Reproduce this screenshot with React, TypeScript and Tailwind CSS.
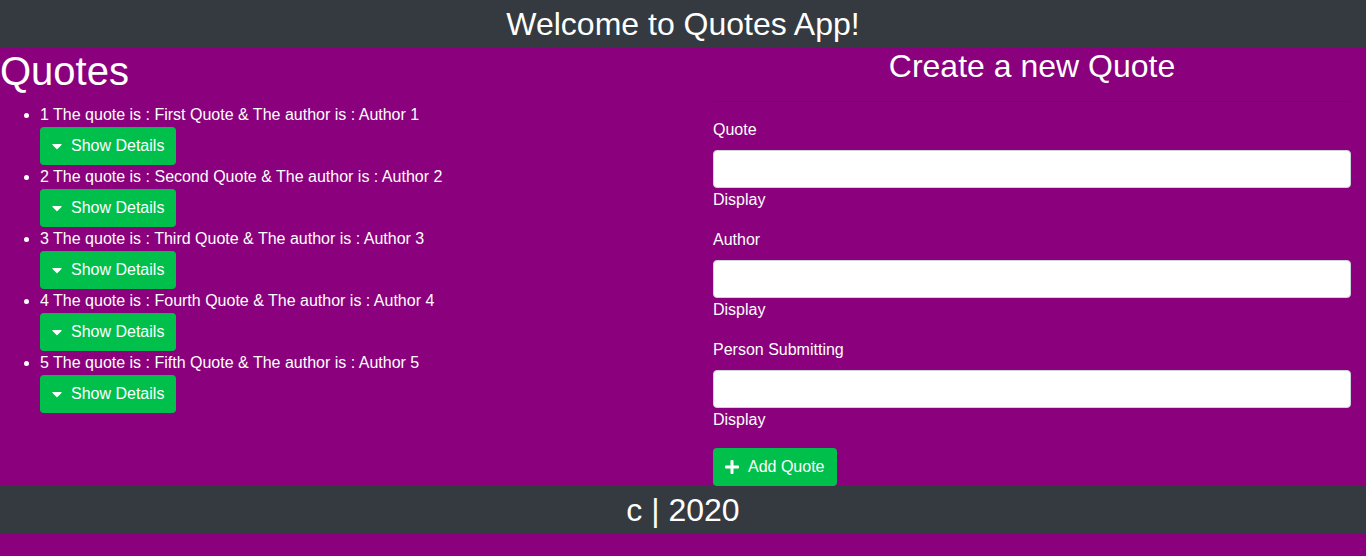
import React from 'react'

const quotes = [
  { id: 1, text: 'First Quote', author: 'Author 1' },
  { id: 2, text: 'Second Quote', author: 'Author 2' },
  { id: 3, text: 'Third Quote', author: 'Author 3' },
  { id: 4, text: 'Fourth Quote', author: 'Author 4' },
  { id: 5, text: 'Fifth Quote', author: 'Author 5' },
]

const fields = ['Quote', 'Author', 'Person Submitting']

const App: React.FC = () => {
  return (
    <div className="min-h-[556px] bg-[#8b007d] text-white font-['Liberation_Sans',Arial,sans-serif] text-base leading-6">
      <header className="h-[47px] bg-[#343a40] flex items-center justify-center">
        <h1 className="text-[32px] leading-[38px]">Welcome to Quotes App!</h1>
      </header>

      <main className="grid grid-cols-2">
        <section>
          <h1 className="text-[40px] leading-[48px] mb-2">Quotes</h1>
          <ul className="list-disc pl-10 mb-4">
            {quotes.map((q) => (
              <li key={q.id}>
                {q.id} The quote is : {q.text} &amp; The author is : {q.author}
                <div>
                  <button className="h-[38px] px-3 flex items-center rounded bg-[#00c04b] text-white">
                    <svg width="10" height="16" viewBox="0 0 320 512" className="mr-[9px]" fill="currentColor">
                      <path d="M31.3 192h257.3c17.8 0 26.7 21.5 14.1 34.1L174.1 354.8c-7.8 7.8-20.5 7.8-28.3 0L17.2 226.1C4.6 213.5 13.5 192 31.3 192z" />
                    </svg>
                    Show Details
                  </button>
                </div>
              </li>
            ))}
          </ul>
        </section>

        <section className="pl-[30px] pr-[15px]">
          <h2 className="text-[32px] leading-[38px] text-center">Create a new Quote</h2>
          <hr className="mt-4 mb-4 border-t border-black/10" />
          <form>
            {fields.map((f) => (
              <div key={f} className="mb-4">
                <label className="block mb-2">{f}</label>
                <input className="block w-full h-[38px] px-3 bg-white text-[#495057] rounded border border-[#ced4da]" />
                <div>Display</div>
              </div>
            ))}
            <button type="button" className="h-[38px] px-3 flex items-center rounded bg-[#00c04b] text-white">
              <svg width="14" height="16" viewBox="0 0 448 512" className="mr-[9px]" fill="currentColor">
                <path d="M416 208H272V64c0-17.67-14.33-32-32-32h-32c-17.67 0-32 14.33-32 32v144H32c-17.67 0-32 14.33-32 32v32c0 17.67 14.33 32 32 32h144v144c0 17.67 14.33 32 32 32h32c17.67 0 32-14.33 32-32V304h144c17.67 0 32-14.33 32-32v-32c0-17.67-14.33-32-32-32z" />
              </svg>
              Add Quote
            </button>
          </form>
        </section>
      </main>

      <footer className="h-[47px] bg-[#343a40] flex items-center justify-center">
        <p className="text-[32px] leading-[38px]">c | 2020</p>
      </footer>
    </div>
  )
}

export default App
